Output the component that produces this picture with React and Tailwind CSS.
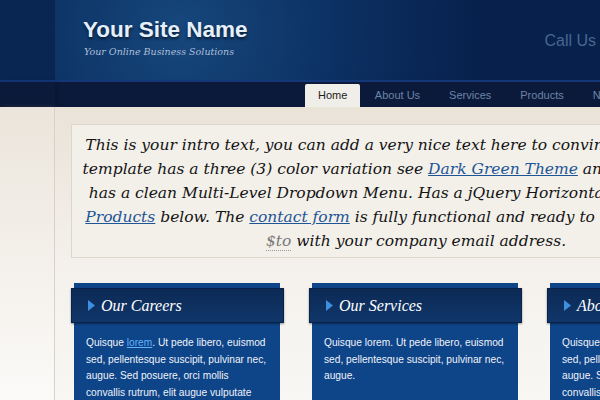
import React from "react";

const navItems = ["Home", "About Us", "Services", "Products", "News", "Contact"];

const introLines = [
  [{ t: "This is your intro text, you can add a very nice text here to convince your visitors. It" }],
  [
    { t: "template has a three (3) color variation see " },
    { t: "Dark Green Theme", link: true },
    { t: " and " },
    { t: "Dark Red Theme", link: true },
  ],
  [{ t: "has a clean Multi-Level Dropdown Menu. Has a jQuery Horizontal Accordion in the" }],
  [
    { t: "Products", link: true },
    { t: " below. The " },
    { t: "contact form", link: true },
    { t: " is fully functional and ready to use simply replace" },
  ],
  [{ t: "$to", code: true }, { t: " with your company email address." }],
];

const cards = [
  {
    title: "Our Careers",
    body: (
      <>
        Quisque{" "}
        <span className="text-[#5fb3ff] underline">lorem</span>. Ut pede
        libero, euismod sed, pellentesque suscipit, pulvinar nec, augue. Sed
        posuere, orci mollis convallis rutrum, elit augue vulputate
      </>
    ),
  },
  {
    title: "Our Services",
    body: (
      <>
        Quisque lorem. Ut pede libero, euismod sed, pellentesque suscipit,
        pulvinar nec, augue.
      </>
    ),
  },
  {
    title: "About Us",
    body: (
      <>
        Quisque lorem. Ut pede libero, euismod sed, pellentesque suscipit,
        pulvinar nec, augue. Sed posuere, orci mollis convallis rutrum
      </>
    ),
  },
];

const Card = ({ title, body }) => (
  <div className="w-[206px] shrink-0 bg-[#0e4488] pt-[5px] pb-6">
    <div className="ml-[-3px] mr-[-4px] h-[35px] flex items-center pl-[16px] bg-gradient-to-b from-[#0c2a55] to-[#10366a] border border-[#0a2248] shadow-[0_1px_2px_rgba(0,0,0,0.4)]">
      <svg width="7" height="11" viewBox="0 0 7 11" className="mr-[6px]">
        <path d="M0 0 L7 5.5 L0 11 Z" fill="#3f8fe0" />
      </svg>
      <span
        className="text-white italic text-[16px]"
        style={{ fontFamily: '"Liberation Serif", serif' }}
      >
        {title}
      </span>
    </div>
    <p
      className="px-[12px] pt-[12px] text-[#eef3fa] text-[10.2px] leading-[16.5px]"
      style={{ fontFamily: '"Liberation Sans", Arial, sans-serif' }}
    >
      {body}
    </p>
  </div>
);

export default function App() {
  return (
    <div
      className="w-[600px] h-[400px] overflow-hidden flex flex-col bg-[#f8f7f4]"
      style={{ fontFamily: '"Liberation Sans", Arial, sans-serif' }}
    >
      {/* header */}
      <div className="h-[80px] shrink-0 flex bg-[#07204c]">
        <div className="w-[55px] shrink-0 bg-[#092552] shadow-[2px_0_4px_rgba(0,0,0,0.18)]" />
        <div className="flex-1 flex items-start justify-between bg-[radial-gradient(circle_at_125px_32px,#16477c_0%,#0c3062_38%,#07204c_72%)]">
          <div className="pl-[28px] pt-[16px]">
            <div className="text-[22.5px] font-bold leading-[28px] text-[#e6f0fb] [text-shadow:0_2px_3px_rgba(0,0,0,0.6)]">
              Your Site Name
            </div>
            <div
              className="italic text-[9.5px] text-[#aebfd8] mt-[1px] ml-[1px]"
              style={{ fontFamily: '"DejaVu Serif", serif' }}
            >
              Your Online Business Solutions
            </div>
          </div>
          <div className="pt-[29px] pr-[4px] text-[16px] text-[#4a6690]">
            Call Us
          </div>
        </div>
      </div>

      {/* nav */}
      <div className="h-[27px] shrink-0 flex bg-[#0b1a3a] border-t-2 border-[#12387a]">
        <div className="w-[55px] shrink-0 bg-[#0b1a3a] shadow-[2px_0_4px_rgba(0,0,0,0.2)]" />
        <div className="flex items-end pl-[250px]">
          {navItems.map((item, i) => (
            <div
              key={item}
              className={
                i === 0
                  ? "h-[23px] px-[13px] flex items-center text-[11px] text-[#1c1c1c] bg-[#f0eee8] rounded-t-[2px] whitespace-nowrap"
                  : "h-[23px] px-[14.5px] flex items-center text-[11px] text-[#6d84a8] whitespace-nowrap"
              }
            >
              {item}
            </div>
          ))}
        </div>
      </div>

      {/* body */}
      <div className="flex-1 flex">
        <div className="w-[55px] shrink-0 bg-gradient-to-b from-[#ebe5db] to-[#fdfcfb] border-r border-[#d9d1c5] shadow-[2px_0_5px_rgba(120,100,70,0.25)]" />
        <div className="flex-1 min-w-0 pl-[16px] pt-[17px] bg-gradient-to-b from-[#e9e3d8] via-[#f4f1ec] to-[#f9f8f6]">
          <div
            className="w-[690px] h-[134px] bg-[#f3f0ea] border border-[#ddd6cb] pt-[8px] text-center italic text-[#141414] text-[15.5px] leading-[24px]"
            style={{ fontFamily: '"DejaVu Serif", serif' }}
          >
            {introLines.map((line, i) => (
              <div key={i} className="whitespace-nowrap">
                {line.map((seg, j) =>
                  seg.link ? (
                    <span key={j} className="text-[#1d5596] underline">
                      {seg.t}
                    </span>
                  ) : seg.code ? (
                    <span
                      key={j}
                      className="text-[#7a7a7a] border-b border-dotted border-[#999]"
                    >
                      {seg.t}
                    </span>
                  ) : (
                    <span key={j}>{seg.t}</span>
                  )
                )}
              </div>
            ))}
          </div>

          <div className="flex gap-[32px] pl-[3px] mt-[25px]">
            {cards.map((c) => (
              <Card key={c.title} {...c} />
            ))}
          </div>
        </div>
      </div>
    </div>
  );
}
